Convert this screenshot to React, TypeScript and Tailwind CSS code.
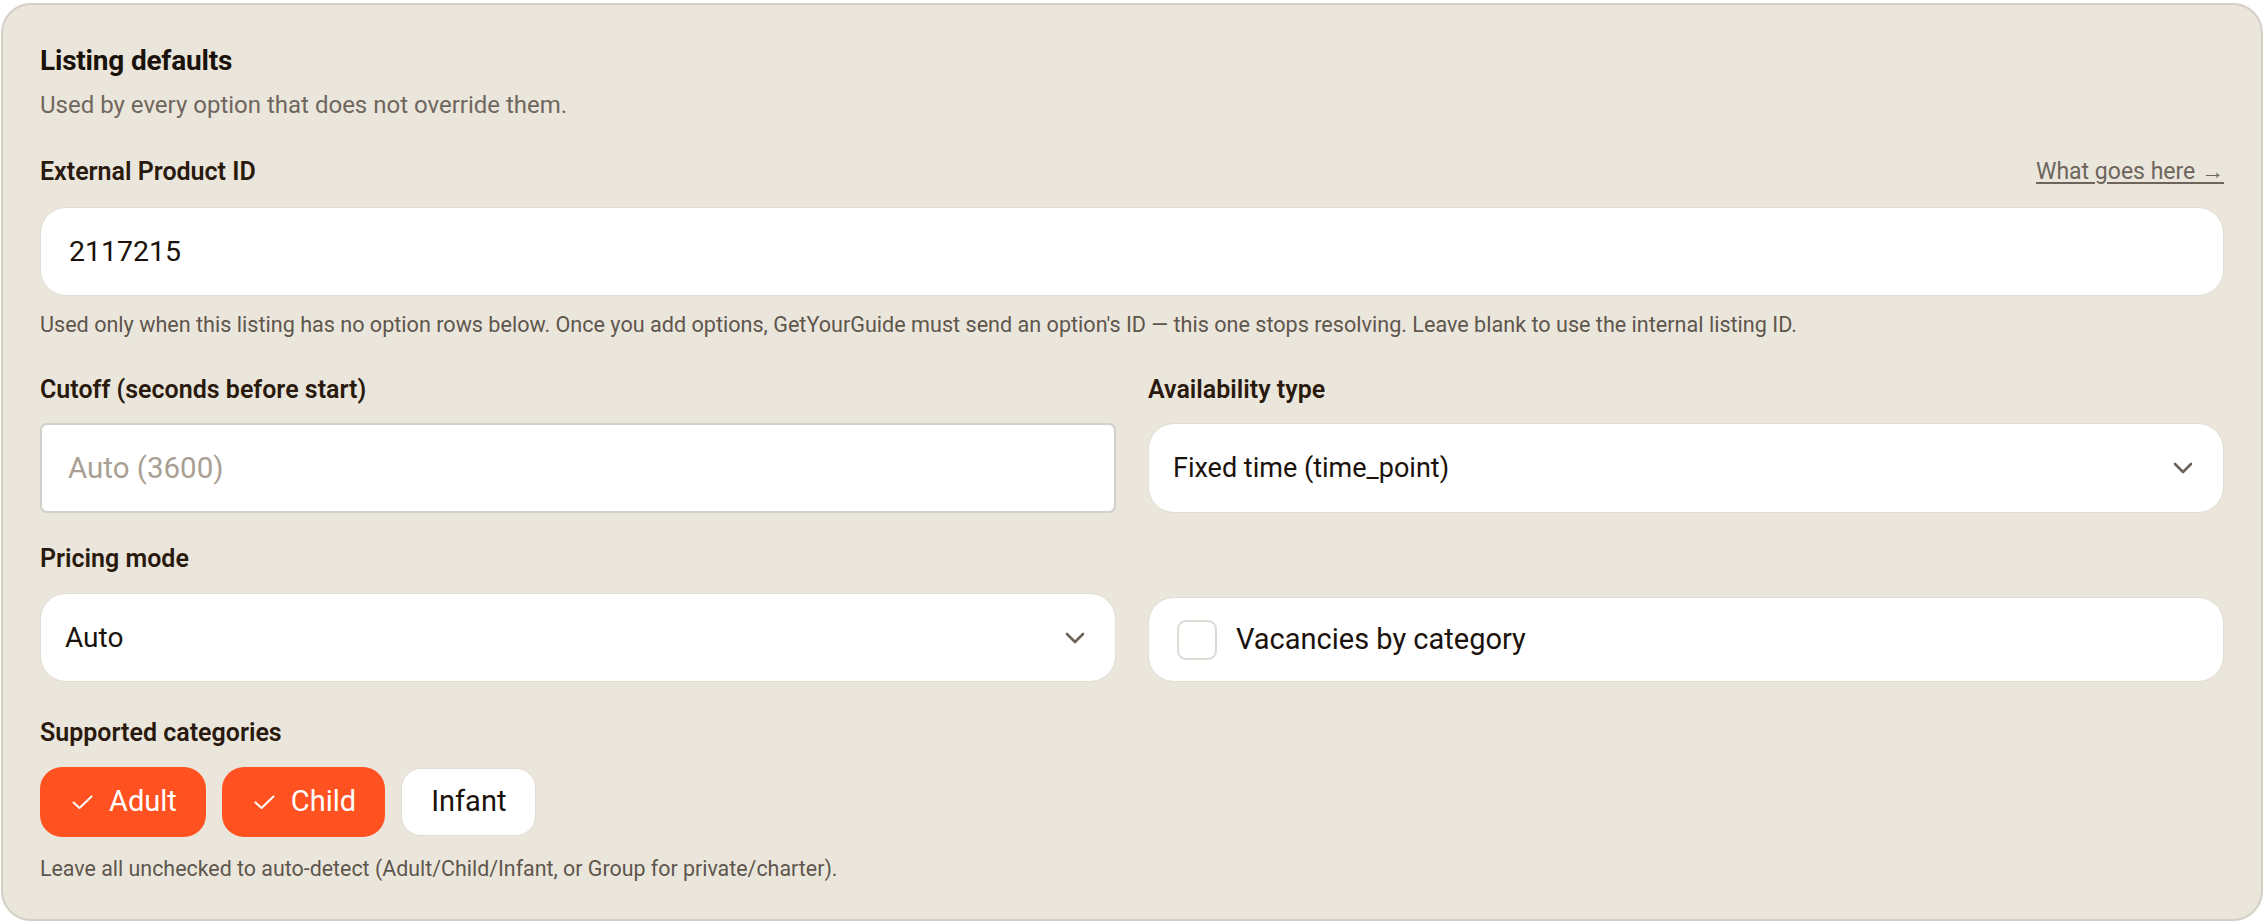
import { useState } from "react";

const categories = ["Adult", "Child", "Infant"];

function Chevron() {
  return (
    <svg width="20" height="12" viewBox="0 0 20 12" fill="none" className="shrink-0">
      <path d="M2 2 L10 10 L18 2" stroke="#6b6258" strokeWidth="2.6" strokeLinecap="round" strokeLinejoin="round" />
    </svg>
  );
}

function CheckMark() {
  return (
    <svg width="21" height="15" viewBox="0 0 21 15" fill="none" className="shrink-0">
      <path d="M1.5 7.5 L7.5 13 L19.5 1.5" stroke="#ffffff" strokeWidth="2" strokeLinecap="round" strokeLinejoin="round" />
    </svg>
  );
}

export default function App() {
  const [selected, setSelected] = useState<string[]>(["Adult", "Child"]);
  const [vacancies, setVacancies] = useState(false);

  const toggle = (c: string) =>
    setSelected((prev) => (prev.includes(c) ? prev.filter((x) => x !== c) : [...prev, c]));

  return (
    <div className="min-h-screen bg-white px-[1px] pt-[3px] font-[Roboto,sans-serif]">
      <div className="rounded-[30px] border-2 border-[#d4cfc5] bg-[#ebe6dc] px-[37px] pt-[41px] pb-[37px]">
        {/* Header */}
        <h2 className="text-[28px] leading-[30px] font-bold tracking-[-0.2px] text-[#1a120b]">Listing defaults</h2>
        <p className="mt-[14px] text-[24px] leading-[30px] text-[#6f675e]">
          Used by every option that does not override them.
        </p>

        {/* External product id */}
        <div className="mt-[38px] flex items-center justify-between">
          <label className="text-[25px] leading-[28px] font-semibold text-[#2a1a0e]">External Product ID</label>
          <a href="#" className="text-[23px] leading-[28px] text-[#6d655b] underline underline-offset-[3px]">
            What goes here →
          </a>
        </div>
        <input
          type="text"
          defaultValue="2117215"
          className="mt-[21px] block h-[89px] w-full rounded-[26px] border border-[#e2ddd3] bg-white px-[28px] text-[28.5px] text-[#1a120b] outline-none"
        />
        <p className="mt-[16px] text-[21.6px] leading-[26px] text-[#5e564d]">
          Used only when this listing has no option rows below. Once you add options, GetYourGuide must send an
          option's ID — this one stops resolving. Leave blank to use the internal listing ID.
        </p>

        {/* Cutoff / availability / pricing / vacancies */}
        <div className="mt-[38px] grid grid-cols-2 gap-x-[32px]">
          <div>
            <label className="block text-[25px] leading-[28px] font-semibold text-[#2a1a0e]">
              Cutoff (seconds before start)
            </label>
            <input
              type="text"
              placeholder="Auto (3600)"
              className="mt-[19px] block h-[90px] w-full rounded-[7px] border-2 border-[#d2d0cc] bg-white px-[26px] text-[29.5px] text-[#1a120b] outline-none placeholder:text-[#a99f93]"
            />
          </div>
          <div>
            <label className="block text-[25px] leading-[28px] font-semibold text-[#2a1a0e]">Availability type</label>
            <button
              type="button"
              className="mt-[19px] flex h-[90px] w-full items-center justify-between rounded-[26px] border border-[#e2ddd3] bg-white pr-[30px] pl-[24px] text-left text-[27px] text-[#1a120b]"
            >
              <span>Fixed time (time_point)</span>
              <Chevron />
            </button>
          </div>

          <div className="mt-[32px]">
            <label className="block text-[25px] leading-[28px] font-semibold text-[#2a1a0e]">Pricing mode</label>
            <button
              type="button"
              className="mt-[20px] flex h-[89px] w-full items-center justify-between rounded-[26px] border border-[#e2ddd3] bg-white pr-[30px] pl-[24px] text-left text-[28px] text-[#1a120b]"
            >
              <span>Auto</span>
              <Chevron />
            </button>
          </div>
          <div className="flex items-end">
            <button
              type="button"
              onClick={() => setVacancies((v) => !v)}
              className="flex h-[85px] w-full items-center gap-[19px] rounded-[26px] border border-[#e2ddd3] bg-white px-[28px] text-left"
            >
              <span
                className={
                  vacancies
                    ? "flex h-[40px] w-[40px] items-center justify-center rounded-[9px] border-2 border-[#ff5220] bg-[#ff5220]"
                    : "flex h-[40px] w-[40px] items-center justify-center rounded-[9px] border-2 border-[#dedbd5] bg-white"
                }
              >
                {vacancies && <CheckMark />}
              </span>
              <span className="text-[29px] text-[#1a120b]">Vacancies by category</span>
            </button>
          </div>
        </div>

        {/* Categories */}
        <label className="mt-[37px] block text-[25px] leading-[28px] font-semibold text-[#2a1a0e]">
          Supported categories
        </label>
        <div className="mt-[20px] flex items-center gap-[16px]">
          {categories.map((c) => {
            const on = selected.includes(c);
            return (
              <button
                key={c}
                type="button"
                onClick={() => toggle(c)}
                className={
                  on
                    ? "flex h-[70px] items-center gap-[16px] rounded-[22px] bg-[#ff5220] pr-[29px] pl-[32px] text-[29px] text-white"
                    : "flex h-[68px] items-center rounded-[20px] border border-[#e2ddd3] bg-white px-[29px] text-[29px] text-[#1a120b]"
                }
              >
                {on && <CheckMark />}
                <span>{c}</span>
              </button>
            );
          })}
        </div>
        <p className="mt-[19px] text-[21.4px] leading-[26px] text-[#5e564d]">
          Leave all unchecked to auto-detect (Adult/Child/Infant, or Group for private/charter).
        </p>
      </div>
    </div>
  );
}
